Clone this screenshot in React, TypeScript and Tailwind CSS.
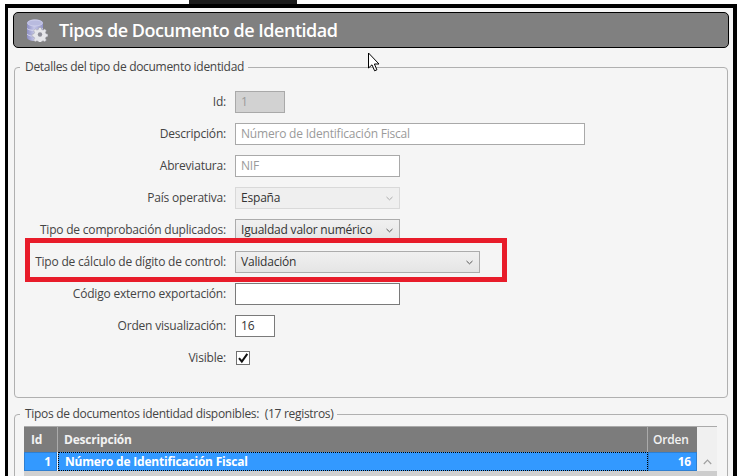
import React from 'react';

const font = { fontFamily: '"Open Sans", "Noto Sans", sans-serif' };

function DbGearIcon() {
  return (
    <svg width="22" height="23" viewBox="0 0 22 23">
      <defs>
        <linearGradient id="db" x1="0" x2="1" y1="0" y2="0">
          <stop offset="0" stopColor="#8d8fc4" />
          <stop offset="0.45" stopColor="#c5c6e6" />
          <stop offset="1" stopColor="#9395c9" />
        </linearGradient>
      </defs>
      <path d="M1 4c0-2.200 3.500-3.500 8-3.500S17 1.800 17 4v14.500c0 2-3.500 3.500-8 3.500s-8-1.500-8-3.500z" fill="url(#db)" />
      <ellipse cx="9" cy="4" rx="7.500" ry="3" fill="#b9bbdf" stroke="#dcddf2" strokeWidth="0.6" />
      <path d="M1 9.500c2 2.500 13 2.500 16 0M1 15c2 2.500 8 2.500 10 1.500" fill="none" stroke="#dfe0f3" strokeWidth="0.8" />
      <path
        d="M12.800 8.500h2.400l.4 1.900 1.500.6 1.600-1 1.700 1.700-1 1.600.6 1.500 1.900.4v2.400l-1.900.4-.6 1.500 1 1.600-1.700 1.700-1.600-1-1.500.6-.4 1.100h-2.400l-.4-1.100-1.500-.6-1.600 1-1.700-1.700 1-1.600-.6-1.500-1.900-.4v-2.400l1.900-.4.6-1.500-1-1.600 1.700-1.700 1.600 1 1.500-.6z"
        fill="#e6e6ea"
        stroke="#9a9aa6"
        strokeWidth="0.5"
      />
      <circle cx="14" cy="15.500" r="2.200" fill="#8e8e98" />
    </svg>
  );
}

function Chevron({ color = '#555' }: { color?: string }) {
  return (
    <svg width="7" height="5" viewBox="0 0 7 5" className="shrink-0">
      <path d="M.5 1 3.500 3.800 6.500 1" fill="none" stroke={color} strokeWidth="1" />
    </svg>
  );
}

function Row({ label, children }: { label: string; children: React.ReactNode }) {
  return (
    <div className="flex h-[22px] items-center">
      <span className="w-[202px] shrink-0 text-right text-[12px] tracking-[-0.2px] text-[#444]">{label}</span>
      <div className="ml-[9px] flex items-center">{children}</div>
    </div>
  );
}

function Input({ value, width, muted, bg }: { value?: string; width: string; muted?: boolean; bg?: string }) {
  return (
    <div
      className={`flex h-[22px] items-center border px-[5px] text-[12px] tracking-[-0.2px] ${width} ${bg ?? 'bg-white'} ${muted ? 'border-[#a9a9a9] text-[#9a9a9a]' : 'border-[#7a7a7a] text-[#333]'}`}
    >
      {value}
    </div>
  );
}

function Select({ value, width, disabled }: { value: string; width: string; disabled?: boolean }) {
  return (
    <div
      className={`flex h-[22px] items-center justify-between border pl-[5px] pr-[6px] text-[12px] tracking-[-0.2px] text-[#333] ${width} ${disabled ? 'border-[#d9d9d9] bg-[#efefef]' : 'border-[#acacac] bg-gradient-to-b from-[#f0f0f0] to-[#e5e5e5]'}`}
    >
      <span>{value}</span>
      <Chevron color={disabled ? '#aaa' : '#555'} />
    </div>
  );
}

function Cursor() {
  return (
    <svg className="absolute left-[367px] top-[52px]" width="14" height="21" viewBox="0 0 14 21">
      <path d="M1.500 1v15l3.500-3.200 2.600 6 2.300-1-2.500-5.800h4.600z" fill="#fff" stroke="#000" strokeWidth="1" />
    </svg>
  );
}

export default function App() {
  return (
    <div className="relative h-[476px] w-[740px] overflow-hidden bg-white" style={font}>
      {/* dark tab peeking above the window */}
      <div className="absolute left-[189px] top-0 h-[4px] w-[108px] bg-[#1c1c1c]" />

      <div className="ml-[5px] mt-[4px] h-[472px] w-[732px] border-l-[3px] border-r-[4px] border-t-[4px] border-black bg-[#f5f5f5] px-[5px] pt-[4px]">
        <div className="flex h-[36px] w-[716px] items-center rounded-[5px] border border-black bg-[#808080] pl-[12px] text-[#fff]">
          <DbGearIcon />
          <span className="ml-[11px] text-[18px] font-semibold tracking-[-0.47px]">Tipos de Documento de Identidad</span>
        </div>

        <fieldset className="ml-[1px] mt-[11px] h-[339px] w-[714px] rounded-[4px] border border-[#b0b0b0] pl-[9px]">
          <legend className="-ml-[4px] pl-[5px] pr-[4px] text-[12px] leading-[16px] tracking-[-0.3px] text-[#444]">
            Detalles del tipo de documento identidad
          </legend>
          <div className="mt-[16px] flex flex-col gap-[10px]">
            <Row label="Id:">
              <Input value="1" width="w-[50px]" muted bg="bg-[#d2d2d2]" />
            </Row>
            <Row label="Descripción:">
              <Input value="Número de Identificación Fiscal" width="w-[350px]" muted />
            </Row>
            <Row label="Abreviatura:">
              <Input value="NIF" width="w-[165px]" muted />
            </Row>
            <Row label="País operativa:">
              <Select value="España" width="w-[165px]" disabled />
            </Row>
            <Row label="Tipo de comprobación duplicados:">
              <Select value="Igualdad valor numérico" width="w-[165px]" />
            </Row>
            <Row label="Tipo de cálculo de dígito de control:">
              <Select value="Validación" width="w-[245px]" />
            </Row>
            <Row label="Código externo exportación:">
              <Input width="w-[165px]" />
            </Row>
            <Row label="Orden visualización:">
              <Input value="16" width="w-[40px]" />
            </Row>
            <Row label="Visible:">
              <div className="ml-[1px] flex h-[14px] w-[14px] items-center justify-center border border-[#707070] bg-white">
                <svg width="12" height="12" viewBox="0 0 12 12">
                  <path d="M2 6.200 4.800 9.500 10.300 1.800" fill="none" stroke="#111" strokeWidth="2" />
                </svg>
              </div>
            </Row>
          </div>
        </fieldset>

        <fieldset className="ml-[1px] mt-[8px] h-[80px] w-[714px] rounded-[4px] border border-[#b0b0b0] pl-[9px]">
          <legend className="-ml-[4px] whitespace-pre pl-[5px] pr-[4px] text-[12px] leading-[16px] tracking-[-0.3px] text-[#444]">
            Tipos de documentos identidad disponibles:  (17 registros)
          </legend>
          <div className="mt-[4px] w-[693px]">
            <div className="flex h-[26px] items-center border-t border-[#aaa] bg-[#7c7c7c] text-[12px] font-bold tracking-[-0.2px] text-[#f2f2f2]">
              <div className="flex h-full w-[34px] items-center border-r border-[#aaa] pl-[7px]">Id</div>
              <div className="flex h-full w-[590px] items-center border-r border-[#aaa] pl-[6px]">Descripción</div>
              <div className="flex h-full w-[49px] items-center pl-[5px] font-semibold">Orden</div>
              <div className="h-full w-[20px] bg-[#f0f0f0]" />
            </div>
            <div className="flex h-[19px] text-[12px] font-bold tracking-[-0.2px] text-white">
              <div className="flex w-[33px] items-center justify-end border border-[#2f7fd0] bg-[#3399ff] pr-[5px]">1</div>
              <div className="ml-[1px] flex w-[590px] items-center border border-dotted border-black bg-[#3399ff] pl-[6px]">
                Número de Identificación Fiscal
              </div>
              <div className="flex w-[49px] items-center justify-end border border-[#2f7fd0] bg-[#3399ff] pr-[5px]">16</div>
              <div className="flex w-[20px] items-center justify-center bg-[#f0f0f0]">
                <svg width="9" height="6" viewBox="0 0 9 6">
                  <path d="M.8 5 4.500 1.200 8.200 5" fill="none" stroke="#a0a0a0" strokeWidth="1.200" />
                </svg>
              </div>
            </div>
            <div className="flex h-[6px]">
              <div className="w-[673px] bg-[#d0d0d0]" />
              <div className="w-[20px] bg-[#cdcdcd]" />
            </div>
          </div>
        </fieldset>
      </div>

      {/* red highlight drawn over the screenshot */}
      <div className="absolute left-[25px] top-[238px] h-[44px] w-[482px] border-[5px] border-[#e81c2a]" />
      <Cursor />
    </div>
  );
}
